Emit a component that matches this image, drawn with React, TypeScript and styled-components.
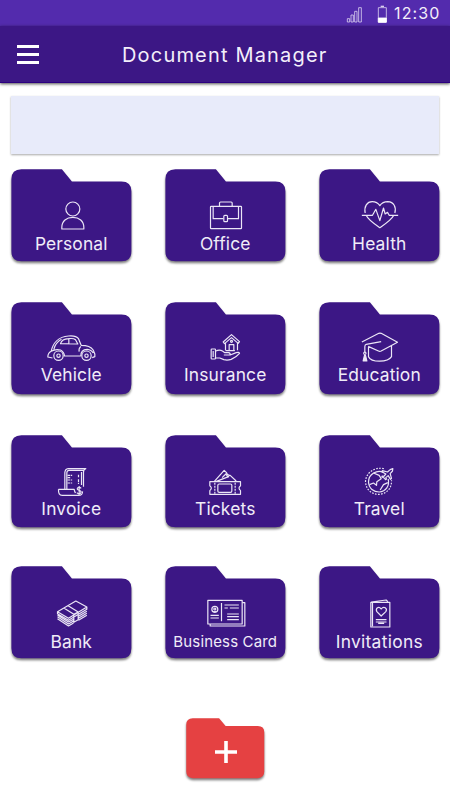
import React from "react";
import styled, { createGlobalStyle } from "styled-components";

const GlobalStyle = createGlobalStyle`
  * { box-sizing: border-box; }
  body {
    margin: 0;
    background: #fff;
    font-family: Inter, "Liberation Sans", sans-serif;
  }
`;

const Screen = styled.div`
  width: 450px;
  height: 800px;
  overflow: hidden;
  display: flex;
  flex-direction: column;
  background: #fff;
`;

const StatusBar = styled.div`
  height: 25.7px;
  flex: none;
  display: flex;
  justify-content: flex-end;
  background: #532bad;
`;

const StatusIcons = styled.svg`
  width: 50px;
  height: 26px;
  flex: none;
  margin: 0.5px -1px 0 0;
`;

const Clock = styled.time`
  width: 56px;
  flex: none;
  font-size: 16px;
  line-height: 27px;
  letter-spacing: 1.15px;
  color: #f3effa;
  white-space: nowrap;
`;

const Header = styled.header`
  height: 57.3px;
  flex: none;
  display: flex;
  align-items: center;
  padding: 1.5px 0 0 17px;
  background: #3c1785;
  border-bottom: 1px solid #2c0080;
  box-shadow: 0 1px 3px rgba(0, 0, 0, 0.7);
`;

const MenuButton = styled.button`
  width: 21.5px;
  height: 19px;
  padding: 0;
  border: 0;
  background: none;
  display: flex;
  flex-direction: column;
  justify-content: space-between;
`;

const MenuLine = styled.span`
  height: 3px;
  background: #fff;
`;

const Title = styled.h1`
  margin: 0 0 0 83.5px;
  font-size: 20px;
  font-weight: 400;
  line-height: 26px;
  letter-spacing: 1.18px;
  color: #f3effa;
  white-space: nowrap;
`;

const Banner = styled.div`
  height: 58px;
  flex: none;
  margin: 13px 10.7px 0;
  background: #e8ebfa;
  box-shadow: 0 1px 2px rgba(0, 0, 0, 0.35);
`;

const Grid = styled.main`
  display: grid;
  grid-template-columns: repeat(3, 120px);
  grid-template-rows: 133px 133px 131.5px 92px;
  column-gap: 34px;
  margin: 15px 0 0 11.2px;
`;

const FolderCard = styled.section`
  position: relative;
  isolation: isolate;
  width: 120px;
  height: 92px;
  display: flex;
  flex-direction: column;
  align-items: center;
  padding-top: 29px;
`;

const FolderBack = styled.svg`
  position: absolute;
  inset: 0;
  z-index: -1;
  width: 100%;
  height: 100%;
  overflow: visible;
  filter: drop-shadow(0 2px 1.3px rgba(0, 0, 0, 0.5));
`;

const Glyph = styled.svg`
  width: 60px;
  height: 34px;
  flex: none;
  overflow: visible;
  fill: none;
  stroke: #ebe6f6;
  stroke-width: 3.6;
  stroke-linejoin: round;
`;

const Label = styled.span<{ $drop: number; $size: number; $spacing: number }>`
  margin-top: ${(p) => p.$drop}px;
  padding-left: ${(p) => p.$spacing}px;
  font-size: ${(p) => p.$size}px;
  line-height: 24px;
  letter-spacing: ${(p) => p.$spacing}px;
  color: #f0ecf8;
  white-space: nowrap;
`;

const Footer = styled.footer`
  display: flex;
  justify-content: center;
  margin-top: 60px;
`;

const AddButton = styled.button`
  position: relative;
  isolation: isolate;
  width: 78px;
  height: 60px;
  padding: 7px 0 0 1px;
  border: 0;
  background: none;
  display: flex;
  align-items: center;
  justify-content: center;
`;

const PlusIcon = styled.svg`
  width: 22px;
  height: 22px;
  stroke: #fff;
  stroke-width: 3.6;
`;

const FOLDER =
  "M10 0H50.5L60.5 12.2H110Q120 12.2 120 22V82Q120 92 110 92H10Q0 92 0 82V10Q0 0 10 0Z";

type Item = { name: string; box: string; icon: React.ReactNode; size?: number; spacing?: number };

const rows: { drop: number; items: Item[] }[] = [
  {
    drop: -0.3,
    items: [
      {
        name: "Personal",
        box: "124 114 180 102",
        icon: (
          <>
            <circle cx="218" cy="147" r="21" />
            <path d="M185 207V202C185 183 199 172 218 172S251 183 251 202V207Z" />
          </>
        ),
      },
      {
        name: "Office",
        box: "122 114 180 102",
        icon: (
          <>
            <rect x="167" y="139" width="93" height="67" rx="2" />
            <path d="M194 138V129Q194 126 197 126H229Q232 126 232 129V138M175 140V176H206M219 176H251V140" />
            <rect x="207" y="166" width="11" height="19" rx="3" />
          </>
        ),
      },
      {
        name: "Health",
        box: "134 114 180 102",
        icon: (
          <>
            <path d="M181 159C177 139 187 125 202 125Q217 125 225 137Q233 125 249 125C267 126 275 141 270 159M184 166C191 181 209 192 225 203C241 192 259 181 267 166" />
            <path d="M171 166H203L213 148L225 182L236 144L241 162L248 157L253 166H280" />
          </>
        ),
      },
    ],
  },
  {
    drop: -2,
    items: [
      {
        name: "Vehicle",
        box: "124 108 180 102",
        icon: (
          <>
            <path d="M191 183H242M157 189L143 186Q143 174 153 169C158 145 175 125 205 123Q228 121 235 131L243 151Q270 151 279 165L284 177V185L276 188M153 169Q166 161 181 165Q192 171 193 183M242 184Q241 164 261 163Q274 164 279 174M181 146Q185 132 205 131Q220 129 226 134L233 147ZM206 131V147M242 154Q235 160 237 170M161 163Q166 143 184 133" />
            <circle cx="175" cy="182" r="14" />
            <circle cx="175" cy="182" r="5" />
            <circle cx="259" cy="182" r="14" />
            <circle cx="259" cy="182" r="5" />
          </>
        ),
      },
      {
        name: "Insurance",
        box: "122 108 180 102",
        icon: (
          <>
            <path d="M205 141L230 119L254 140L250 145L230 128L209 146ZM212 145V166M248 144V166M223 168V149H237V168" />
            <circle cx="230" cy="139" r="3" />
            <rect x="169" y="162" width="13" height="30" rx="2" />
            <path d="M175 168V186M183 168Q194 163 203 168L210 173H221Q227 174 226 180H207M226 180L244 173Q253 170 254 175Q244 187 229 193Q218 197 207 194L195 189H183M212 167H240" />
          </>
        ),
      },
      {
        name: "Education",
        box: "134 108 180 102",
        icon: (
          <>
            <path d="M171 141L222 115Q225 114 229 115L278 142L229 168Q225 170 221 168L190 154M229 140L184 148Q180 149 180 155V171M191 156V185C199 203 249 203 260 185V153" />
            <circle cx="180" cy="175" r="3.5" />
            <path d="M179 181L175 198H186L182 181Z" fill="#ebe6f6" />
          </>
        ),
      },
    ],
  },
  {
    drop: -0.8,
    items: [
      {
        name: "Invoice",
        box: "124 102 180 102",
        icon: (
          <>
            <path d="M194 177V128Q195 117 204 116H257Q250 118 250 126V170M200 177V128Q201 121 206 121H249M175 178H222Q223 184 226 189M175 178Q174 196 186 196H235Q248 196 247 184M244 126V165" />
            <path d="M202 136H216M202 143H212M202 150H216M202 159H216M235 134V144M235 148V162" strokeDasharray="8 2" />
            <path d="M243 175Q239 170 233 173Q228 179 237 181Q246 184 241 190Q235 194 230 188M237 168V195" />
          </>
        ),
      },
      {
        name: "Tickets",
        box: "588 102 180 102",
        icon: (
          <>
            <path d="M631 155H723V167Q714 174 723 182V193H631V182Q640 174 631 167ZM644 155L674 121L681 128Q682 137 692 136L710 153M649 155L689 139" />
            <rect x="655" y="162" width="42" height="25" rx="4" />
            <path d="M707 158V192M646 158V192" strokeDasharray="6 3" />
            <path d="M668 143L679 132L686 142" />
          </>
        ),
      },
      {
        name: "Travel",
        box: "374 102 180 102",
        icon: (
          <>
            <path d="M477 116C452 110 424 126 422 154C423 181 443 194 463 193C487 191 501 174 500 151" strokeDasharray="5 4" />
            <path d="M476 127C457 118 431 132 431 156C432 176 447 186 463 186C483 184 495 168 490 147" />
            <path d="M446 129L463 136L469 146L456 155L455 166L446 159L434 164M489 158L476 164L466 180" />
            <path d="M504 116L496 119L488 126L473 122L471 125L483 132L477 139L472 138L471 141L478 144L482 149L485 147L483 143L490 137L497 148L500 145L496 131L503 123Z" />
          </>
        ),
      },
    ],
  },
  {
    drop: 0.5,
    items: [
      {
        name: "Bank",
        box: "124 106 180 102",
        icon: (
          <>
            <path d="M172 156L227 124L260 142L205 176ZM172 156V162L205 182L260 149V142M172 166L205 187L220 179M235 170L260 155M172 171L205 193L220 184M235 176L260 161M172 177L205 199L220 190M235 182L260 167M191 145L221 164V188L234 180V157L204 138M221 164L234 157" />
          </>
        ),
      },
      {
        name: "Business Card",
        size: 15,
        spacing: 0.15,
        box: "60 106 180 102",
        icon: (
          <>
            <path d="M97 122H200V193H97ZM202 129H208V199H104V194M138 130V185M147 136H190M147 145H157M163 145H190M155 163H190M155 171H190M155 180H190M105 167H130M105 175H130" />
            <circle cx="118" cy="149" r="9" />
            <circle cx="118" cy="148" r="3" />
            <path d="M113 156H123" />
          </>
        ),
      },
      {
        name: "Invitations",
        spacing: 0.3,
        box: "523 106 180 102",
        icon: (
          <>
            <path d="M587 128H644V202H587ZM588 127L633 121L638 126M592 130V200" />
            <path d="M618 169L605 156C600 145 611 138 618 148C626 138 638 146 632 156Z" />
            <path d="M602 180H634M602 187H634M609 191H627" />
          </>
        ),
      },
    ],
  },
];

const FolderShape = ({ color }: { color: string }) => (
  <FolderBack viewBox="-0.4 -0.2 120 92" preserveAspectRatio="none" aria-hidden>
    <path d={FOLDER} fill={color} />
  </FolderBack>
);

export default function App() {
  return (
    <>
      <GlobalStyle />
      <Screen>
        <StatusBar>
          <StatusIcons viewBox="360 0 150 78" fill="none" stroke="#d9ceee" strokeWidth="2.5">
            <path d="M367 53H374V63H367ZM378 42H385V63H378ZM389 31H396V63H389ZM401 20H409V63H401Z" />
            <path d="M460 20H484V63H460Z" />
            <path d="M467 16H477" strokeWidth="4" />
            <path d="M460 51H484V64H460Z" fill="#fff" stroke="#fff" />
          </StatusIcons>
          <Clock>12:30</Clock>
        </StatusBar>
        <Header>
          <MenuButton aria-label="Menu">
            <MenuLine />
            <MenuLine />
            <MenuLine />
          </MenuButton>
          <Title>Document Manager</Title>
        </Header>
        <Banner />
        <Grid>
          {rows.map((row) =>
            row.items.map((item) => (
              <FolderCard key={item.name}>
                <FolderShape color="#3c1785" />
                <Glyph viewBox={item.box}>
                  <g transform="translate(1.5 0)">{item.icon}</g>
                </Glyph>
                <Label $drop={row.drop} $size={item.size ?? 17.4} $spacing={item.spacing ?? 0.15}>
                  {item.name}
                </Label>
              </FolderCard>
            ))
          )}
        </Grid>
        <Footer>
          <AddButton aria-label="Add folder">
            <FolderShape color="#e54142" />
            <PlusIcon viewBox="0 0 22 22">
              <path d="M11 0V22M0 11H22" />
            </PlusIcon>
          </AddButton>
        </Footer>
      </Screen>
    </>
  );
}
